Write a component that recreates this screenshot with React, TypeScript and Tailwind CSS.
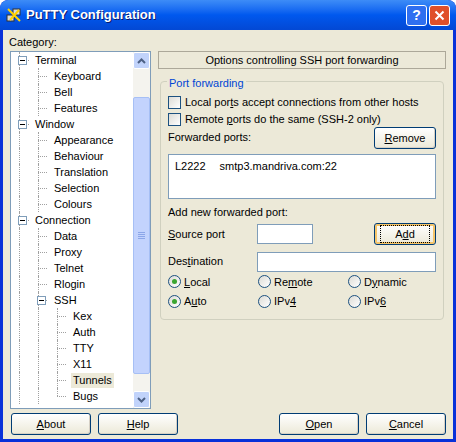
import React from 'react'

const font = { fontFamily: 'Tahoma, "Liberation Sans", Arial, sans-serif' }

type Node = { label: string; level: number; expand?: boolean; selected?: boolean; lines: number[] }

// lines: x positions of vertical dotted guides passing through this row
const tree: Node[] = [
  { label: 'Terminal', level: 0, expand: true, lines: [22] },
  { label: 'Keyboard', level: 1, lines: [22, 41] },
  { label: 'Bell', level: 1, lines: [22, 41] },
  { label: 'Features', level: 1, lines: [22, 41] },
  { label: 'Window', level: 0, expand: true, lines: [22] },
  { label: 'Appearance', level: 1, lines: [22, 41] },
  { label: 'Behaviour', level: 1, lines: [22, 41] },
  { label: 'Translation', level: 1, lines: [22, 41] },
  { label: 'Selection', level: 1, lines: [22, 41] },
  { label: 'Colours', level: 1, lines: [22, 41] },
  { label: 'Connection', level: 0, expand: true, lines: [22] },
  { label: 'Data', level: 1, lines: [22, 41] },
  { label: 'Proxy', level: 1, lines: [22, 41] },
  { label: 'Telnet', level: 1, lines: [22, 41] },
  { label: 'Rlogin', level: 1, lines: [22, 41] },
  { label: 'SSH', level: 1, expand: true, lines: [22, 41] },
  { label: 'Kex', level: 2, lines: [22, 41, 60] },
  { label: 'Auth', level: 2, lines: [22, 41, 60] },
  { label: 'TTY', level: 2, lines: [22, 41, 60] },
  { label: 'X11', level: 2, lines: [22, 41, 60] },
  { label: 'Tunnels', level: 2, selected: true, lines: [22, 41, 60] },
  { label: 'Bugs', level: 2, lines: [22, 41, 60] },
]

const XpButton = ({ children, w = 'w-[80px]', focus }: { children: React.ReactNode; w?: string; focus?: boolean }) => (
  <div className={`${w} h-[22px] rounded-[3px] border border-[#003c74] bg-gradient-to-b from-white to-[#ece9d8] flex items-center justify-center text-[11px] text-black ${focus ? 'shadow-[inset_0_0_0_2px_#f5c56a]' : 'shadow-[inset_-1px_-1px_0_#d6d0c5]'}`}>
    {focus ? <span className="px-[14px] outline-1 outline-dotted outline-black">{children}</span> : children}
  </div>
)

const Check = ({ label }: { label: React.ReactNode }) => (
  <div className="flex items-center gap-[4px] h-[17px]">
    <div className="w-[13px] h-[13px] border border-[#1c5180] bg-gradient-to-br from-[#dcdbd5] to-white" />
    <span>{label}</span>
  </div>
)

const Radio = ({ label, on }: { label: React.ReactNode; on?: boolean }) => (
  <div className="flex items-center gap-[3px]">
    <div className="w-[13px] h-[13px] rounded-full border border-[#1c5180] bg-gradient-to-br from-[#dcdbd5] to-white flex items-center justify-center">
      {on && <div className="w-[5px] h-[5px] rounded-full bg-[#3aa531]" />}
    </div>
    <span>{label}</span>
  </div>
)

const Plus = () => (
  <div className="w-[9px] h-[9px] border border-[#7f9db9] bg-white flex items-center justify-center relative z-10">
    <div className="w-[5px] h-[1px] bg-black" />
  </div>
)

export default function App() {
  return (
    <div style={font} className="w-[456px] h-[442px] bg-[#0831d9] rounded-t-[8px] flex flex-col overflow-hidden text-[11px] text-black">
      {/* Title bar */}
      <div className="h-[30px] flex items-center px-[6px] bg-gradient-to-b from-[#3d8cf7] via-[#0058ee] to-[#0348d4] rounded-t-[8px]">
        <svg width="16" height="16" viewBox="0 0 16 16" className="mr-[4px]">
          <rect x="1" y="8" width="7" height="6" fill="#d8d8d8" stroke="#333" />
          <rect x="7" y="2" width="7" height="6" fill="#d8d8d8" stroke="#333" />
          <path d="M2 2 L14 14 M13 3 L4 13" stroke="#ffd200" strokeWidth="2" />
        </svg>
        <span className="text-white font-bold text-[13px] [text-shadow:1px_1px_0_#0a1a6e] flex-1">PuTTY Configuration</span>
        <div className="w-[21px] h-[21px] rounded-[3px] border border-white bg-[#2f6ff0] text-white font-bold text-[14px] flex items-center justify-center mr-[2px]">?</div>
        <div className="w-[21px] h-[21px] rounded-[3px] border border-white bg-[#e0502a] flex items-center justify-center">
          <svg width="11" height="11" viewBox="0 0 11 11"><path d="M1.5 1.5 L9.5 9.5 M9.5 1.5 L1.5 9.5" stroke="white" strokeWidth="2" /></svg>
        </div>
      </div>

      {/* Body */}
      <div className="flex-1 mx-[3px] mb-[3px] bg-[#ece9d8] flex flex-col px-[5px]">
        <div className="h-[20px] pt-[4px] pl-[1px]">Category:</div>
        <div className="flex gap-[7px]">
          {/* Tree */}
          <div className="w-[141px] h-[358px] border border-[#7f9db9] bg-white flex ml-[2px] mt-[1px]">
            <div className="flex-1 overflow-hidden">
              {tree.map((n) => (
                <div key={n.label} className="h-[16px] relative flex items-center">
                  {n.lines.map((x, i) => {
                    const lastChild = n.label === 'Bugs' && i === 2
                    return (
                      <div key={x} className="absolute top-0 border-l border-dotted border-[#a0a0a0]"
                        style={{ left: x - 14, height: lastChild ? 8 : 16 }} />
                    )
                  })}
                  <div className="absolute top-[8px] border-t border-dotted border-[#a0a0a0]"
                    style={{ left: n.lines[n.lines.length - 1] - 14, width: n.level === 0 ? 10 : 9 }} />
                  <div style={{ marginLeft: n.level * 19 + 4 }} className="w-[14px] flex items-center justify-center">
                    {n.expand ? <Plus /> : null}
                  </div>
                  <span className={`ml-[4px] px-[2px] leading-[15px] relative z-10 ${n.selected ? 'bg-[#ece9d8]' : 'bg-white'}`}>{n.label}</span>
                </div>
              ))}
            </div>
            {/* Scrollbar */}
            <div className="w-[17px] bg-[#f4f3ee] flex flex-col">
              <div className="h-[17px] rounded-[2px] bg-[#c1d3fb] border border-white flex items-center justify-center">
                <svg width="9" height="6" viewBox="0 0 9 6"><path d="M1 5 L4.5 1.5 L8 5" stroke="#4d6185" strokeWidth="2" fill="none" /></svg>
              </div>
              <div className="h-[28px]" />
              <div className="h-[277px] rounded-[2px] bg-[#c3d3fd] border border-[#a6bff5] flex items-center justify-center">
                <div className="flex flex-col gap-[1px]">
                  {[0, 1, 2, 3].map((i) => <div key={i} className="w-[7px] h-[1px] bg-[#8ca6e8]" />)}
                </div>
              </div>
              <div className="flex-1" />
              <div className="h-[17px] rounded-[2px] bg-[#c1d3fb] border border-white flex items-center justify-center">
                <svg width="9" height="6" viewBox="0 0 9 6"><path d="M1 1 L4.5 4.5 L8 1" stroke="#4d6185" strokeWidth="2" fill="none" /></svg>
              </div>
            </div>
          </div>

          {/* Right panel */}
          <div className="flex-1 flex flex-col pt-[1px] pr-[2px]">
            <div className="h-[18px] border border-[#aca899] flex items-center justify-center">Options controlling SSH port forwarding</div>
            <div className="mt-[12px] mx-[2px] h-[239px] border border-[#d0d0bf] rounded-[4px] px-[7px] relative">
              <span className="absolute -top-[7px] left-[6px] px-[2px] bg-[#ece9d8] text-[#0046d5]">Port forwarding</span>
              <div className="pt-[12px]">
                <Check label={<>Local por<u>t</u>s accept connections from other hosts</>} />
                <Check label={<>Remote <u>p</u>orts do the same (SSH-2 only)</>} />
                <div className="flex items-end justify-between h-[19px] mt-[2px]">
                  <span className="mb-[4px]">Forwarded ports:</span>
                  <XpButton w="w-[62px]"><><u>R</u>emove</></XpButton>
                </div>
                <div className="mt-[5px] h-[45px] border border-[#7f9db9] bg-white pl-[6px] pt-[3px]">
                  <span>L2222</span><span className="ml-[14px]">smtp3.mandriva.com:22</span>
                </div>
                <div className="mt-[5px]">Add new forwarded port:</div>
                <div className="flex items-center mt-[3px] h-[21px]">
                  <span className="w-[89px]"><u>S</u>ource port</span>
                  <div className="w-[56px] h-[20px] border border-[#7f9db9] bg-white" />
                  <div className="flex-1" />
                  <XpButton w="w-[62px]" focus><>A<u>d</u>d</></XpButton>
                </div>
                <div className="flex items-center mt-[7px] h-[20px]">
                  <span className="w-[89px]">Des<u>t</u>ination</span>
                  <div className="flex-1 h-[20px] border border-[#7f9db9] bg-white" />
                </div>
                <div className="grid grid-cols-[90px_90px_1fr] mt-[2px] gap-y-[3px]">
                  <Radio on label={<><u>L</u>ocal</>} />
                  <Radio label={<>Re<u>m</u>ote</>} />
                  <Radio label={<>D<u>y</u>namic</>} />
                  <Radio on label={<>A<u>u</u>to</>} />
                  <Radio label={<>IPv<u>4</u></>} />
                  <Radio label={<>IPv<u>6</u></>} />
                </div>
              </div>
            </div>
          </div>
        </div>

        {/* Bottom buttons */}
        <div className="flex mt-[4px] pl-[3px] pr-[2px]">
          <XpButton><><u>A</u>bout</></XpButton>
          <div className="ml-[7px]"><XpButton><><u>H</u>elp</></XpButton></div>
          <div className="flex-1" />
          <XpButton><><u>O</u>pen</></XpButton>
          <div className="ml-[7px]"><XpButton><><u>C</u>ancel</></XpButton></div>
        </div>
      </div>
    </div>
  )
}
